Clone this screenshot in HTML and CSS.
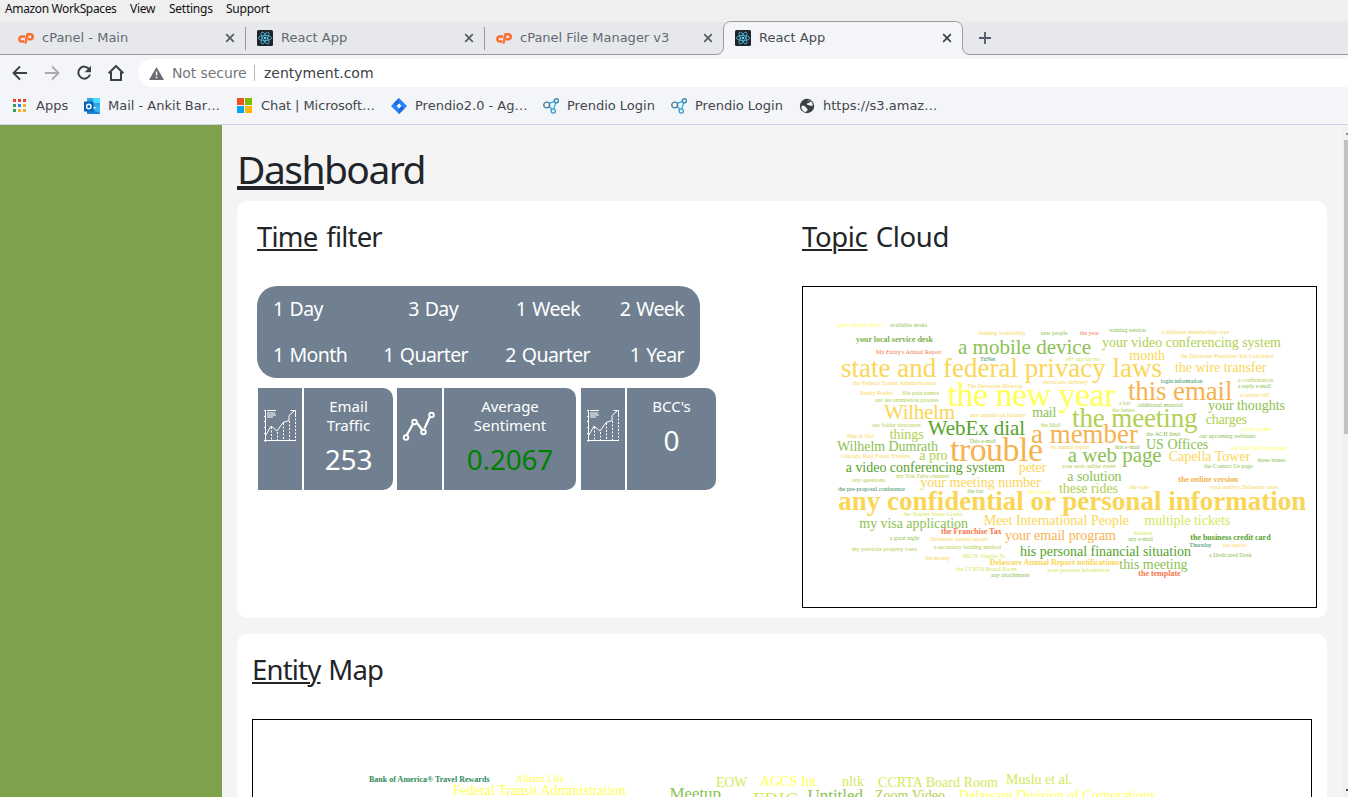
FILE: index.html
```html
<!DOCTYPE html>
<html lang="en">
<head>
<meta charset="utf-8">
<title>React App</title>
<link rel="stylesheet" href="styles.css">
</head>
<body>
<svg class="defs" aria-hidden="true">
  <symbol id="cpanel" viewBox="0 0 16 16"><g fill="none" stroke="#ff6c2c" stroke-width="2.500"><path d="M7.200 6.500H3.900a2.500 2.500 0 0 0 0 5H6"/><path d="M7.300 13.500L9.600 4.200H12.200a2.500 2.500 0 0 1 0 5H10"/></g></symbol>
  <symbol id="react" viewBox="0 0 16 16"><rect width="16" height="16" rx="1.500" fill="#20232a"/><g fill="none" stroke="#53c1de" stroke-width=".8"><ellipse cx="8" cy="8" rx="6.600" ry="2.500"/><ellipse cx="8" cy="8" rx="6.600" ry="2.500" transform="rotate(60 8 8)"/><ellipse cx="8" cy="8" rx="6.600" ry="2.500" transform="rotate(120 8 8)"/></g><circle cx="8" cy="8" r="1.300" fill="#61dafb"/></symbol>
  <symbol id="close" viewBox="0 0 10 10"><path d="M1.200 1.200l7.600 7.600M8.800 1.200L1.200 8.800" stroke="currentColor" stroke-width="1.700"/></symbol>
  <symbol id="prendio" viewBox="0 0 16 16"><g fill="none" stroke-width="1.400"><path d="M6 5.500L11.800 3.200M13 4.300L10.500 11M6 8l3 3.800" stroke="#35b6e8"/><circle cx="3.700" cy="7" r="2.900" stroke="#4c7f9c"/><circle cx="13.300" cy="2.800" r="2.100" stroke="#3c88ad"/><circle cx="10.300" cy="13" r="2.100" stroke="#3e9cc4"/></g></symbol>
  <symbol id="chart" viewBox="0 0 34 34"><g fill="none" stroke="#fff" stroke-width="1"><path d="M2.500 1v32M1 31.500h32M1 1.500h2M1 7.500h1M1 12.500h1M1 18.500h1M1 24.500h1"/><path d="M4 1.500h9M4 4h8M4 6h9M4 8h6" /><path d="M3 26l5-9 6 5 6-8.500 6-2V6.500l5-4.500M27.500 1.500H32.500V6"/><path d="M8.500 18v14M14.500 23v9M20.500 14v18M26.500 12v20M32.500 6v26" stroke-dasharray="2 1.500"/></g></symbol>
</svg>

<nav class="menubar"><span class="m1">Amazon WorkSpaces</span><span class="m2">View</span><span class="m3">Settings</span><span class="m4">Support</span></nav>

<div class="tabs">
  <div class="tab"><svg class="fav"><use href="#cpanel"/></svg><span>cPanel - Main</span><svg class="x"><use href="#close"/></svg></div>
  <div class="tab"><svg class="fav"><use href="#react"/></svg><span>React App</span><svg class="x"><use href="#close"/></svg></div>
  <div class="tab last"><svg class="fav"><use href="#cpanel"/></svg><span>cPanel File Manager v3</span><svg class="x"><use href="#close"/></svg></div>
  <div class="tab active"><svg class="shape" viewBox="0 0 256 35"><path d="M0 35V33.500h1.500a7 7 0 0 0 7-7V7.500a7 7 0 0 1 7-7h225a7 7 0 0 1 7 7v19a7 7 0 0 0 7 7H256V35z" fill="#f4f5f8"/><path d="M0 33.500h1.500a7 7 0 0 0 7-7V7.500a7 7 0 0 1 7-7h225a7 7 0 0 1 7 7v19a7 7 0 0 0 7 7H256" fill="none" stroke="#9b9b9d"/></svg><svg class="fav"><use href="#react"/></svg><span>React App</span><svg class="x"><use href="#close"/></svg></div>
  <svg class="plus" viewBox="0 0 12 12"><path d="M6 0v12M0 6h12" stroke="#50586a" stroke-width="1.800"/></svg>
</div>

<div class="toolbar">
  <svg class="tool" viewBox="0 0 16 16"><path d="M15 8H2M8 1.500L1.500 8 8 14.500" fill="none" stroke="#3c4046" stroke-width="1.900"/></svg>
  <svg class="tool" viewBox="0 0 16 16"><path d="M1 8h13M8 1.500L14.500 8 8 14.500" fill="none" stroke="#a9abae" stroke-width="1.800"/></svg>
  <svg class="tool" viewBox="0 0 16 16"><path d="M13.300 4.300A6 6 0 1 0 14 9.500" fill="none" stroke="#3c4046" stroke-width="2"/><path d="M15 .8v6.400H8.700z" fill="#3c4046"/></svg>
  <svg class="tool" viewBox="0 0 16 16"><path d="M.7 8.200L8 1l7.300 7.200M3 7v8h10V7" fill="none" stroke="#3c4046" stroke-width="2"/></svg>
  <div class="address"><svg class="warn" viewBox="0 0 15 13"><path d="M7.500 0L15 13H0z" fill="#696c70"/><path d="M6.800 4.500h1.500v4H6.800zM6.800 9.700h1.500v1.500H6.800z" fill="#fff"/></svg><span class="insecure">Not secure</span><span class="url">zentyment.com</span></div>
</div>

<div class="bookmarks">
  <div class="bm b1"><svg viewBox="0 0 16 16"><path d="M1 1h3v3H1zM6 1h3v3H6zM11 1h3v3h-3z" fill="#ea4335"/><path d="M1 6h3v3H1z" fill="#34a05a"/><path d="M6 6h3v3H6z" fill="#2f80f0"/><path d="M11 6h3v3h-3z" fill="#f0b02a"/><path d="M1 11h3v3H1z" fill="#34a05a"/><path d="M6 11h3v3H6zM11 11h3v3h-3z" fill="#f0b02a"/></svg><span>Apps</span></div>
  <div class="bm b2"><svg viewBox="0 0 16 16"><path d="M3 0h13v9H3z" fill="#28a8ea"/><path d="M9 0h7v5H9z" fill="#50d9ff"/><path d="M3 7l7 4 6-4v9H3z" fill="#1a82cf"/><path d="M9 12l7-5v8z" fill="#35b8f1"/><rect y="3.500" width="9.500" height="10" rx=".6" fill="#0a62b8"/><circle cx="4.800" cy="8.500" r="2.200" fill="none" stroke="#fff" stroke-width="1.400"/></svg><span>Mail - Ankit Bar…</span></div>
  <div class="bm b3"><svg viewBox="0 0 16 16"><path d="M0 0h7v7H0z" fill="#f25022"/><path d="M8 0h7v7H8z" fill="#7fba00"/><path d="M0 8h7v7H0z" fill="#00a4ef"/><path d="M8 8h7v7H8z" fill="#ffb900"/></svg><span>Chat | Microsoft…</span></div>
  <div class="bm b4"><svg viewBox="0 0 16 16"><path d="M8 0l8 8-8 8-8-8z" fill="#2684ff"/><path d="M8 0v5.500L5.500 8 2.500 5.500zM8 16v-5.500L10.500 8l3 2.500z" fill="#1b68de"/><path d="M8 5.600L10.400 8 8 10.400 5.600 8z" fill="#fff"/></svg><span>Prendio2.0 - Ag…</span></div>
  <div class="bm b5"><svg viewBox="0 0 16 16"><use href="#prendio"/></svg><span>Prendio Login</span></div>
  <div class="bm b5"><svg viewBox="0 0 16 16"><use href="#prendio"/></svg><span>Prendio Login</span></div>
  <div class="bm"><svg viewBox="0 0 16 16"><circle cx="8" cy="8" r="7.200" fill="#3c4046"/><path d="M2.500 8c2-.5 4 .2 4.500 1.500s2 .5 1.500 2.500-2 1.500-2.300 2.200C3.500 13 2 11 2.500 8zM8 2.200c2-.2 3 .5 3.500 1.300L10 5H8.500l-.7 1.500 2.700 1 3 .5c.5-1.500 0-3-1-4.200z" fill="#f4f5f8"/></svg><span>https://s3.amaz…</span></div>
</div>

<div class="page">
  <aside class="sidebar"></aside>
  <main class="content">
    <h1><u>Dash</u>board</h1>
    <section class="card top">
      <div class="left">
        <h2 class="t-time"><u>Time</u> filter</h2>
        <div class="filter">
          <span>1 Day</span><span class="in">3 Day</span><span class="in">1 Week</span><span>2 Week</span>
          <span>1 Month</span><span>1 Quarter</span><span>2 Quarter</span><span>1 Year</span>
        </div>
        <div class="stats">
          <div class="stat s1"><div class="ico"><svg viewBox="0 0 34 34"><use href="#chart"/></svg></div><div class="info"><p>Email<br>Traffic</p><b>253</b></div></div>
          <div class="stat s2"><div class="ico"><svg viewBox="0 0 34 34"><g fill="none" stroke="#fff"><path d="M4.500 26.500L11.500 14M15 14l5 6.500M22.500 19.500L27.500 8.500" stroke-width="2.200"/><g stroke-width="1.900"><circle cx="4" cy="28.500" r="2.300"/><circle cx="12.500" cy="13" r="2.300"/><circle cx="21.500" cy="23" r="2.300"/><circle cx="29.500" cy="6" r="2.300"/></g></g></svg></div><div class="info"><p>Average<br>Sentiment</p><b class="pos">0.2067</b></div></div>
          <div class="stat s3"><div class="ico"><svg viewBox="0 0 34 34"><use href="#chart"/></svg></div><div class="info"><p>BCC's</p><b>0</b></div></div>
        </div>
      </div>
      <div class="right">
        <h2 class="t-topic"><u>Topic</u> Cloud</h2>
        <svg class="cloud topic" viewBox="803 287 513 320">
          <g class="z6">
          <text class="f" x="837" y="326.500" textLength="45">your current office</text>
          <text class="c" x="890" y="326.500" textLength="37">available desks</text>
          <text class="i" x="876" y="354" textLength="65.500">My Entity's Annual Report</text>
          <text class="g" x="978.700" y="335" textLength="47">funding availability</text>
          <text class="c" x="1040.700" y="335" textLength="27">new people</text>
          <text class="a" x="980" y="361" textLength="15.500">TriNet</text>
          <text class="e" x="1065" y="361" textLength="35">18+ aga shows</text>
          <text class="g" x="852.700" y="385" textLength="83.500">the Federal Transit Administration</text>
          <text class="g" x="967" y="388" textLength="55.500">The Delaware Division</text>
          <text class="g" x="1043" y="384" textLength="45">electronic delivery</text>
          <text class="g" x="860" y="394.500" textLength="33">Randy Portier</text>
          <text class="d" x="902.300" y="395" textLength="36.700">file path names</text>
          <text class="d" x="874.700" y="402" textLength="63.700">our decommission process</text>
          <text class="g" x="969.700" y="417" textLength="55.500">any unpaid tax balance</text>
          <text class="d" x="872" y="427" textLength="48.700">our folder structures</text>
          <text class="d" x="1040.700" y="427" textLength="19.700">the Mail</text>
          <text class="g" x="847" y="438" textLength="27.300">March 31st</text>
          <text class="c" x="969" y="443" textLength="27">This e-mail</text>
          <text class="g" x="1050.700" y="449" textLength="39">its annual report</text>
          <text class="i" x="1079.700" y="335" textLength="19.300">the year</text>
          <text class="c" x="1109" y="332" textLength="37">training session</text>
          <text class="g" x="1161.700" y="334" textLength="67.700">a different membership type</text>
          <text class="g" x="1180.700" y="358" textLength="93.300">the Delaware Franchise Tax Calculator</text>
          <text class="a" x="1160.700" y="383" textLength="41.700">login information</text>
          <text class="d" x="1237.700" y="382" textLength="35.600">a confirmation</text>
          <text class="c" x="1237.700" y="388" textLength="33.300">a reply e-mail</text>
          <text class="g" x="1240" y="397" textLength="29.300">a lawyer bill</text>
          <text class="d" x="1118.700" y="405" textLength="11.700">a bar</text>
          <text class="c" x="1138" y="407" textLength="45">additional material</text>
          <text class="d" x="1112" y="412" textLength="23">the future</text>
          <text class="f" x="1241.300" y="431" textLength="29.700">a few points</text>
          <text class="c" x="1199.300" y="438" textLength="56.300">our upcoming webinars</text>
          <text class="c" x="1146" y="436" textLength="34.700">the ACH limit</text>
          <text class="f" x="1230.700" y="450" textLength="55.700">the 2019 SOC program</text>
          <text class="c" x="1114.700" y="449" textLength="25.300">this e-mail</text>
          <text class="g" x="841" y="458" textLength="69">Chicago Real Estate Experts</text>
          <text class="d" x="896" y="478" textLength="53">my You Tube channel</text>
          <text class="d" x="852" y="482" textLength="33">any questions</text>
          <text class="a" x="838" y="491" textLength="67">the pre-proposal conference</text>
          <text class="c" x="967.300" y="493" textLength="16.300">the bar</text>
          <text class="f" x="1028" y="494" textLength="23">Hot Desk</text>
          <text class="e" x="903.700" y="516" textLength="59">the Staples Street Center</text>
          <text class="c" x="889.700" y="540" textLength="29.700">a great night</text>
          <text class="g" x="930.300" y="541" textLength="58.300">Delaware annual reports</text>
          <text class="d" x="852" y="551" textLength="65">my previous property tours</text>
          <text class="d" x="933.700" y="549" textLength="67.300">a secondary funding method</text>
          <text class="g" x="925" y="560" textLength="25">the money</text>
          <text class="e" x="962.700" y="558" textLength="43.300">602 N. Staples St.</text>
          <text class="e" x="956" y="571" textLength="61">the CCRTA Board Room</text>
          <text class="c" x="991" y="577" textLength="38.700">any attachments</text>
          <text class="e" x="1047.300" y="572" textLength="62.700">your personal information</text>
          <text class="d" x="1061.700" y="468" textLength="54">your next online event</text>
          <text class="c" x="1257.300" y="462" textLength="28.300">these issues</text>
          <text class="c" x="1204" y="468" textLength="48.700">the Contact Us page</text>
          <text class="g" x="1129.700" y="489" textLength="19.300">the state</text>
          <text class="g" x="1210.300" y="489" textLength="68.300">your entity's Delaware taxes</text>
          <text class="e" x="1133.700" y="535" textLength="18.700">Melissa</text>
          <text class="c" x="1128" y="541" textLength="25">any e-mail</text>
          <text class="a" x="1189.300" y="547" textLength="22.300">Thursday</text>
          <text class="g" x="1223" y="547" textLength="23.300">the report</text>
          <text class="c" x="1209" y="557" textLength="42.700">a Dedicated Desk</text>
          </g>
          <g class="z8">
          <text class="c2" x="856" y="342" textLength="77">your local service desk</text>
          <text class="i" x="941" y="534" textLength="60.700">the Franchise Tax</text>
          <text class="g" x="989.700" y="565" textLength="129.600">Delaware Annual Report notifications</text>
          <text class="h" x="1178.300" y="482" textLength="60">the online version</text>
          <text class="b" x="1190.300" y="540" textLength="80.300">the business credit card</text>
          <text class="i" x="1138.300" y="576" textLength="42.300">the template</text>
          </g>
          <g class="z14">
          <text class="c" x="1032.300" y="416.700" textLength="24">mail</text>
          <text class="d" x="889.700" y="439" textLength="34">things</text>
          <text class="c" x="837" y="451" textLength="101">Wilhelm Dumrath</text>
          <text class="d" x="1102" y="347" textLength="179">your video conferencing system</text>
          <text class="g" x="1129.300" y="360" textLength="35.700">month</text>
          <text class="g" x="1175" y="372" textLength="91.300">the wire transfer</text>
          <text class="c" x="1208" y="410" textLength="77">your thoughts</text>
          <text class="d" x="1205.700" y="424" textLength="41.300">charges</text>
          <text class="c" x="1146" y="449" textLength="62.300">US Offices</text>
          <text class="d" x="919.300" y="460" textLength="28.300">a pro</text>
          <text class="g" x="1018.700" y="472" textLength="27.700">peter</text>
          <text class="b" x="845.700" y="472" textLength="159.300">a video conferencing system</text>
          <text class="g" x="920.300" y="487" textLength="120.700">your meeting number</text>
          <text class="c" x="859.300" y="528" textLength="108.700">my visa application</text>
          <text class="g" x="983.700" y="525" textLength="145.300">Meet International People</text>
          <text class="h" x="1005" y="540" textLength="111">your email program</text>
          <text class="b" x="1020" y="556" textLength="171">his personal financial situation</text>
          <text class="g" x="1168.700" y="461" textLength="81.700">Capella Tower</text>
          <text class="c" x="1067.300" y="481" textLength="54.300">a solution</text>
          <text class="d" x="1059" y="493" textLength="59">these rides</text>
          <text class="e" x="1144.300" y="525" textLength="86">multiple tickets</text>
          <text class="c" x="1119.300" y="569" textLength="68.300">this meeting</text>
          </g>
          <g class="z21">
          <text class="c" x="958" y="354" textLength="133">a mobile device</text>
          <text class="g" x="884" y="418.500" textLength="71">Wilhelm</text>
          <text class="b" x="927.700" y="435" textLength="97.500">WebEx dial</text>
          <text class="c" x="1067.700" y="462" textLength="94">a web page</text>
          </g>
          <g class="z27">
          <text class="g" x="841" y="377" textLength="321">state and federal privacy laws</text>
          <text class="h" x="1031" y="443" textLength="107">a member</text>
          <text class="h" x="1128" y="400" textLength="104.500">this email</text>
          <text class="d" x="1072" y="427" textLength="125.500">the meeting</text>
          <text class="g bold" x="838.300" y="510" textLength="468">any confidential or personal information</text>
          </g>
          <g class="z34">
          <text class="f" x="947.500" y="406" textLength="168">the new year</text>
          <text class="h" x="950" y="461" textLength="93">trouble</text>
          </g>
        </svg>
      </div>
    </section>
    <section class="card entity">
      <h2 class="t-entity"><u>Entity</u> Map</h2>
      <svg class="cloud map" viewBox="253 720 1058 198">
        <g class="z8"><text class="a" x="369" y="782" textLength="120.500">Bank of America® Travel Rewards</text></g>
        <g class="z10"><text class="f" x="516" y="782" textLength="48">Allianz Life</text></g>
        <g class="z14">
        <text class="f" x="452.700" y="795" textLength="173">Federal Transit Administration</text>
        <text class="e" x="716" y="787" textLength="31.500">EOW</text>
        <text class="f" x="760" y="786" textLength="56.500">AGCS Int</text>
        <text class="e" x="842" y="786" textLength="22">nltk</text>
        <text class="e" x="878" y="787" textLength="120">CCRTA Board Room</text>
        <text class="e" x="1006" y="784" textLength="66">Muslu et al.</text>
        <text class="d" x="875" y="800" textLength="70">Zoom Video</text>
        <text class="f" x="959" y="800" textLength="196.500">Delaware Division of Corporations</text>
        </g>
        <g class="z17">
        <text class="c" x="669.500" y="799" textLength="51.500">Meetup</text>
        <text class="c" x="807.500" y="801" textLength="55.500">Untitled</text>
        <text class="e fdic" x="753" y="806" textLength="45">FDIC</text>
        </g>
      </svg>
    </section>
  </main>
  <div class="scroll"><i class="up"></i><i class="thumb"></i><i class="down"></i></div>
</div>
</body>
</html>
```
FILE: styles.css
```css
* { box-sizing: border-box; }
html, body { height: 100%; }
body { margin: 0; overflow: hidden; display: flex; flex-direction: column; height: 797px; font-family: "Noto Sans", sans-serif; color: #212529; background: #f4f4f4; }
.defs { position: absolute; width: 0; height: 0; }

.menubar { flex: none; height: 22px; padding-left: 5px; display: flex; background: #efefef; color: #111; font: 12px/18px "Noto Sans", sans-serif; white-space: nowrap; letter-spacing: -.36px; }
.m1 { width: 125px; }
.m2 { width: 39px; }
.m3 { width: 57px; }
.m2, .m3, .m4 { letter-spacing: -.25px; }

.tabs { flex: none; height: 33px; padding-left: 7px; display: flex; background: #e7e8eb; border-bottom: 1px solid #9b9b9d; }
.tab { position: relative; width: 239px; height: 32px; padding: 0 10px 0 11px; display: flex; align-items: center; border-right: 1px solid #96989c; border-image: linear-gradient(transparent 6px, #96989c 6px, #96989c 27px, transparent 27px) 1; border-top: 0; border-left: 0; border-bottom: 0; color: #646874; font: 13px "DejaVu Sans", sans-serif; }
.tab.last, .tab.active { border-image: none; border-right-color: transparent; }
.tab .fav { width: 16px; height: 16px; margin-right: 8px; }
.tab span { flex: 1; white-space: nowrap; padding-bottom: 2px; }
.tab .x { width: 10px; height: 10px; color: #555a64; }
.tab.active { color: #494c52; }
.tab.active > * { position: relative; }
.tab.active .x { color: #3c4046; }
.tab.active .shape { position: absolute; left: -9px; top: -1px; width: 256px; height: 35px; }
.plus { width: 12px; height: 12px; margin: 10px 0 0 16px; }

.toolbar { flex: none; height: 32px; padding-left: 12px; display: flex; align-items: center; gap: 16px; background: #f4f5f8; padding-top: 4px; }
.tool { width: 16px; height: 16px; flex: none; }
.address { flex: 1; height: 28px; margin-left: -2px; padding-left: 11px; display: flex; align-items: center; background: #fff; border-radius: 14px 0 0 14px; font: 14px "DejaVu Sans", sans-serif; letter-spacing: -.1px; }
.warn { width: 15px; height: 13px; margin-right: 8px; }
.insecure { width: 83px; color: #74777b; border-right: 1px solid #b5b7ba; margin-right: 9px; white-space: nowrap; }
.url { color: #3c4046; letter-spacing: 0; }

.bookmarks { flex: none; height: 38px; padding-left: 12px; display: flex; align-items: center; background: #f4f5f8; border-bottom: 1px solid #cdd2e8; font: 13px "DejaVu Sans", sans-serif; color: #43464c; }
.bm { display: flex; align-items: center; gap: 8px; white-space: nowrap; }
.bm svg { width: 16px; height: 16px; flex: none; }
.b1 { width: 72px; }
.b2 { width: 153px; }
.b3 { width: 154px; letter-spacing: -.08px; }
.b4 { width: 152px; }
.b5 { width: 128px; }

.page { flex: 1; min-height: 0; display: flex; overflow: hidden; }
.sidebar { width: 222px; flex: none; background: #7fa14c; }
.content { flex: 1; padding: 0 15px; overflow: hidden; }
h1 { margin: 0; height: 76px; font-size: 39px; font-weight: 400; line-height: 87px; letter-spacing: -1.550px; }
h1 u { text-decoration-thickness: 4px; text-underline-offset: 2px; text-decoration-skip-ink: none; }
h2 { margin: 0; height: 34px; font-size: 27.500px; font-weight: 400; line-height: 32px; letter-spacing: -.8px; }
h2 u { text-decoration-thickness: 2px; text-underline-offset: 2px; }
.t-time { word-spacing: 2.500px; }
.t-topic { letter-spacing: -.35px; word-spacing: 1.500px; }
.t-entity { word-spacing: 1.500px; }
.card { background: #fff; border-radius: 10px; }
.top { height: 417px; padding: 20px 10px 0 20px; display: flex; justify-content: space-between; }
.left { width: 460px; }
.filter { width: 443px; height: 92px; margin-top: 31px; padding: 0 16px; display: grid; grid-template-columns: 73px 122px 122px 94px; grid-template-rows: 46px 46px; line-height: 45px; background: #708090; border-radius: 20px; color: #fff; font-size: 19.500px; letter-spacing: -.6px; word-spacing: 1.500px; white-space: nowrap; }
.filter span { text-align: right; }
.filter span:nth-child(4n+1) { text-align: left; }
.filter .in { padding-right: 10px; }
.stats { display: flex; margin: 10px 0 0 1px; }
.stat { display: flex; gap: 2px; height: 102px; }
.s1 { width: 135px; margin-right: 4px; }
.s2 { width: 179px; margin-right: 5px; }
.s3 { width: 135px; }
.ico { width: 44px; background: #708090; padding: 21px 5px; }
.s2 .ico { width: 45px; }
.ico svg { display: block; width: 34px; height: 34px; }
.info { flex: 1; background: #708090; border-radius: 0 10px 10px 0; color: #fff; text-align: center; padding-top: 9px; }
.info p { margin: 0; font-size: 15px; line-height: 19px; }
.info b { display: block; margin-top: 5px; font-weight: 400; font-size: 28px; line-height: 38px; letter-spacing: -.2px; }
.info .pos { color: #008000; }
.cloud { display: block; border: 1px solid #000; font-family: "Liberation Serif", serif; }
.topic { width: 515px; height: 322px; margin-top: 31px; }
.entity { margin-top: 16px; height: 320px; padding: 20px 15px 0; }
.map { width: 1060px; height: 200px; margin-top: 31px; }

.a { fill: #2e8b57; }
.b { fill: #56a22b; }
.c { fill: #8cc152; }
.c2 { fill: #79b24c; }
.d { fill: #b0d04f; }
.e { fill: #d5e85a; }
.f { fill: #ffff55; }
.g { fill: #fad657; }
.h { fill: #f7b24f; }
.i { fill: #f4794a; }
.z6 { font-size: 6px; }
.z8 { font-size: 8px; font-weight: 700; }
.z10 { font-size: 10px; }
.z14 { font-size: 14px; }
.z17 { font-size: 17px; }
.z21 { font-size: 21px; }
.z27 { font-size: 27px; }
.z34 { font-size: 34px; }
.fdic { font-size: 19px; }
.bold { font-weight: 700; }

.scroll { width: 6px; flex: none; background: #f1f1f1; display: flex; flex-direction: column; align-items: flex-end; }
.up { width: 2px; height: 2px; margin-top: 8px; background: #8a8a8a; }
.thumb { width: 4px; height: 294px; margin-top: 5px; background: #c1c1c1; }
.down { width: 2px; height: 2px; margin-top: auto; margin-bottom: 6px; background: #505050; }
```
